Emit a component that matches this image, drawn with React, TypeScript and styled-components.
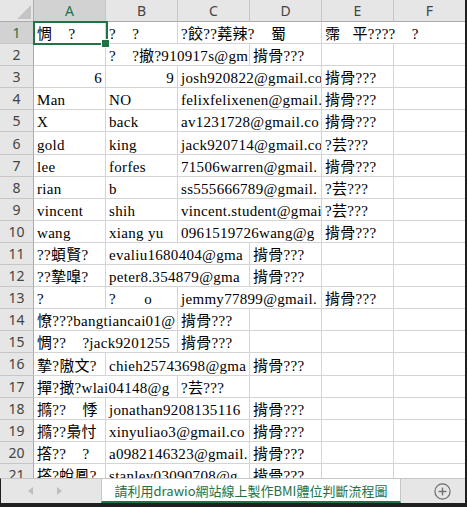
import styled, { createGlobalStyle } from "styled-components";

const GlobalStyle = createGlobalStyle`
  html, body {
    margin: 0;
    padding: 0;
    background: #fff;
  }
  * {
    box-sizing: border-box;
  }
`;

type CellData = { t: string; span?: number; right?: boolean } | null;

const GU = "揹骨???";
const YU = "?芸???";

// texts are cut where the sheet cuts them (overflow into the next empty cell)
const rows: CellData[][] = [
  [{ t: "惆    ?" }, { t: "?    ?" }, { t: "?餃??蕘辣?    蜀", span: 2 }, { t: "霈   平????    ?", span: 2 }],
  [null, { t: "?    ?撤?910917s@gm", span: 2 }, { t: GU }, null, null],
  [{ t: "6", right: true }, { t: "9", right: true }, { t: "josh920822@gmail.co", span: 2 }, { t: GU }, null],
  [{ t: "Man" }, { t: "NO" }, { t: "felixfelixenen@gmail.", span: 2 }, { t: GU }, null],
  [{ t: "X" }, { t: "back" }, { t: "av1231728@gmail.co", span: 2 }, { t: GU }, null],
  [{ t: "gold" }, { t: "king" }, { t: "jack920714@gmail.co", span: 2 }, { t: YU }, null],
  [{ t: "lee" }, { t: "forfes" }, { t: "71506warren@gmail.", span: 2 }, { t: GU }, null],
  [{ t: "rian" }, { t: "b" }, { t: "ss555666789@gmail.", span: 2 }, { t: YU }, null],
  [{ t: "vincent" }, { t: "shih" }, { t: "vincent.student@gmai", span: 2 }, { t: YU }, null],
  [{ t: "wang" }, { t: "xiang yu" }, { t: "0961519726wang@g", span: 2 }, { t: GU }, null],
  [{ t: "??蝢賢?" }, { t: "evaliu1680404@gma", span: 2 }, { t: GU }, null, null],
  [{ t: "??摯嘷?" }, { t: "peter8.354879@gma", span: 2 }, { t: GU }, null, null],
  [{ t: "?" }, { t: "?       o" }, { t: "jemmy77899@gmail.", span: 2 }, { t: GU }, null],
  [{ t: "憭???bangtiancai01@", span: 2 }, { t: GU }, null, null, null],
  [{ t: "惆??    ?jack9201255", span: 2 }, { t: GU }, null, null, null],
  [{ t: "摯?隞文?" }, { t: "chieh25743698@gma", span: 2 }, { t: GU }, null, null],
  [{ t: "撣?撖?wlai04148@g", span: 2 }, { t: YU }, null, null, null],
  [{ t: "撱??    悸" }, { t: "jonathan9208135116", span: 2 }, { t: GU }, null, null],
  [{ t: "撱??梟忖" }, { t: "xinyuliao3@gmail.co", span: 2 }, { t: GU }, null, null],
  [{ t: "撘??    ?" }, { t: "a0982146323@gmail.", span: 2 }, { t: GU }, null, null],
  [{ t: "撘?蛻鳳?" }, { t: "stanley03090708@g", span: 2 }, { t: GU }, null, null],
];

const columns = ["A", "B", "C", "D", "E", "F"];

export default function App() {
  return (
    <>
      <GlobalStyle />
      <Frame>
        <Sheet>
          <Corner>
            <svg width="34" height="21" viewBox="0 0 34 21">
              <polygon points="31,5 31,19 17,19" fill="#c4c4c4" />
            </svg>
          </Corner>
          {columns.map((c, i) => (
            <ColHead key={c} $active={i === 0}>
              {c}
            </ColHead>
          ))}
          {rows.map((row, r) => [
            <RowHead key={"h" + r} $active={r === 0}>
              {r + 1}
            </RowHead>,
            ...row.map((cell, c) => (
              <Cell key={r + "-" + c} $span={cell?.span || 1} $right={cell?.right}>
                {cell ? cell.t : ""}
              </Cell>
            )),
          ])}
          <Selection />
        </Sheet>
        <TabBar>
          <NavArrows>
            <svg width="5" height="8" viewBox="0 0 5 8">
              <polygon points="5,0 5,8 0,4" fill="#bdbdbd" />
            </svg>
            <svg width="5" height="8" viewBox="0 0 5 8">
              <polygon points="0,0 0,8 5,4" fill="#bdbdbd" />
            </svg>
          </NavArrows>
          <SheetTab>請利用drawio網站線上製作BMI體位判斷流程圖</SheetTab>
          <AddArea>
            <svg width="17" height="17" viewBox="0 0 17 17">
              <circle cx="8.5" cy="8.5" r="7.6" fill="none" stroke="#6e6e6e" strokeWidth="1.2" />
              <line x1="8.5" y1="4.6" x2="8.5" y2="12.4" stroke="#6e6e6e" strokeWidth="1.4" />
              <line x1="4.6" y1="8.5" x2="12.4" y2="8.5" stroke="#6e6e6e" strokeWidth="1.4" />
            </svg>
          </AddArea>
        </TabBar>
      </Frame>
    </>
  );
}

const Frame = styled.div`
  width: 467px;
  height: 507px;
  display: flex;
  flex-direction: column;
  border-right: 2px solid #1f1f1f;
  border-bottom: 4px solid #1f1f1f;
  background: #fff;
  overflow: hidden;
`;

const Sheet = styled.div`
  position: relative;
  flex: 1;
  min-height: 0;
  overflow: hidden;
  display: grid;
  grid-template-columns: 34px repeat(6, 72px);
  grid-template-rows: 22px;
  grid-auto-rows: 22.1px;
`;

const ColHead = styled.div<{ $active?: boolean }>`
  display: flex;
  align-items: center;
  justify-content: center;
  background: ${(p) => (p.$active ? "#d2d2d2" : "#e6e6e6")};
  color: ${(p) => (p.$active ? "#217346" : "#444")};
  border-right: 1px solid #c6c6c6;
  border-bottom: 1px solid #ababab;
  font: 14px "Noto Sans", "Open Sans", sans-serif;
  padding-bottom: 1px;
`;

const Corner = styled.div`
  background: #e6e6e6;
  border-right: 1px solid #ababab;
  border-bottom: 1px solid #ababab;
  svg {
    display: block;
  }
`;

const RowHead = styled.div<{ $active?: boolean }>`
  display: flex;
  align-items: center;
  justify-content: center;
  background: ${(p) => (p.$active ? "#d2d2d2" : "#e6e6e6")};
  color: ${(p) => (p.$active ? "#217346" : "#444")};
  border-right: 1px solid #ababab;
  border-bottom: 1px solid #c6c6c6;
  font: 14px "Noto Sans", "Open Sans", sans-serif;
`;

const Cell = styled.div<{ $span: number; $right?: boolean }>`
  grid-column: span ${(p) => p.$span};
  display: flex;
  align-items: flex-end;
  justify-content: ${(p) => (p.$right ? "flex-end" : "flex-start")};
  padding: 0 3px;
  border-right: 1px solid #d4d4d4;
  border-bottom: 1px solid #d4d4d4;
  overflow: hidden;
  white-space: pre;
  color: #000;
  font: 15px/17px "Liberation Serif", "Noto Sans CJK TC", serif;
  letter-spacing: 0.3px;
`;

const Selection = styled.div`
  position: absolute;
  left: 33px;
  top: 21px;
  width: 75px;
  height: 24px;
  border: 2px solid #217346;
  pointer-events: none;
  &::after {
    content: "";
    position: absolute;
    right: -4px;
    bottom: -5px;
    width: 7px;
    height: 7px;
    background: #217346;
    border: 1px solid #fff;
  }
`;

const TabBar = styled.div`
  height: 25px;
  flex-shrink: 0;
  display: flex;
  background: #e6e6e6;
  border-top: 1px solid #c6c6c6;
  border-left: 1px solid #1f1f1f;
`;

const NavArrows = styled.div`
  width: 100px;
  display: flex;
  align-items: center;
  gap: 24px;
  padding-left: 27px;
`;

const SheetTab = styled.div`
  width: 300px;
  display: flex;
  align-items: center;
  justify-content: center;
  background: #fff;
  border-left: 1px solid #c6c6c6;
  border-right: 1px solid #c6c6c6;
  border-bottom: 2px solid #217346;
  color: #217346;
  font: 13px "Noto Sans CJK TC", "Noto Sans", sans-serif;
  white-space: nowrap;
`;

const AddArea = styled.div`
  flex: 1;
  display: flex;
  align-items: center;
  padding-left: 33px;
`;
